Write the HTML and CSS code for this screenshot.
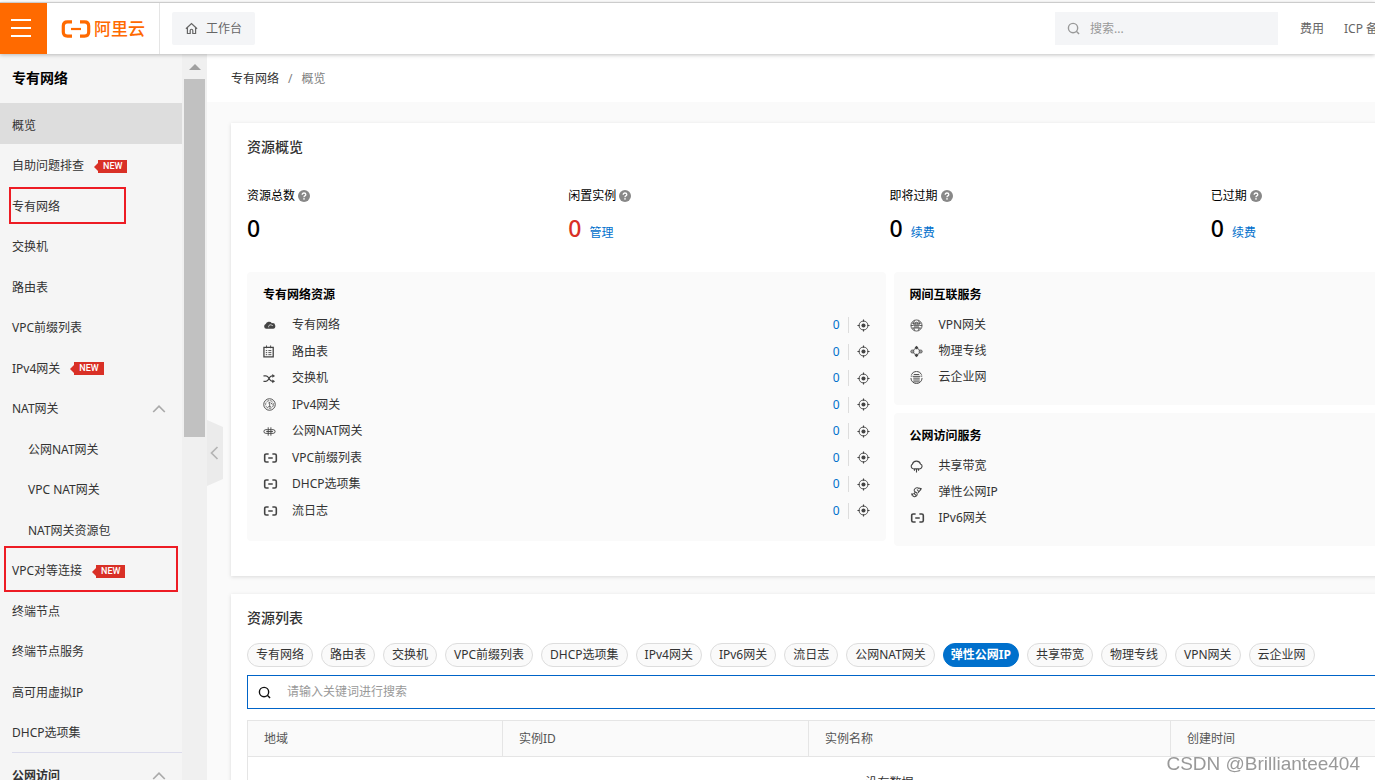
FILE: index.html
```html
<!DOCTYPE html>
<html lang="zh-CN">
<head>
<meta charset="utf-8">
<title>专有网络 - 概览</title>
<link rel="stylesheet" href="styles.css">
</head>
<body>
<svg class="sprite" aria-hidden="true">
  <symbol id="i-bracket" viewBox="0 0 16 12"><path d="M6 1.8H3.4Q1.8 1.8 1.8 3.4V8.6Q1.8 10.2 3.4 10.2H6M10 1.8h2.6q1.6 0 1.6 1.6v5.2q0 1.6-1.6 1.6H10M5.6 6h4.8" fill="none" stroke="currentColor" stroke-width="1.7"/></symbol>
  <symbol id="i-aim" viewBox="0 0 14 14"><circle cx="7" cy="7" r="4.8" fill="none" stroke="currentColor"/><circle cx="7" cy="7" r="2.2" fill="currentColor"/><path d="M7 .5v2.400M7 11.100v2.400M.5 7h2.400M11.100 7h2.400" stroke="currentColor" stroke-width="1.200"/></symbol>
  <symbol id="i-help" viewBox="0 0 12 12"><circle cx="6" cy="6" r="6" fill="#888"/><path d="M4.2 4.7Q4.2 3 6 3t1.8 1.5Q7.8 5.4 6.8 5.9 6 6.300 6 7.200" fill="none" stroke="#fff" stroke-width="1.3"/><circle cx="6" cy="8.900" r=".8" fill="#fff"/></symbol>
  <symbol id="i-search" viewBox="0 0 14 14"><circle cx="6.500" cy="6.500" r="5" fill="none" stroke="currentColor" stroke-width="1.500"/><path d="M10 10l3 3" stroke="currentColor" stroke-width="1.500"/></symbol>
  <symbol id="i-up" viewBox="0 0 14 8"><path d="M1.200 7L7 1.200 12.800 7" fill="none" stroke="currentColor" stroke-width="1.700"/></symbol>
  <symbol id="i-cloud" viewBox="0 0 14 14"><path d="M3.500 10.500A2.600 2.600 0 0 1 2.900 5.500 3.800 3.800 0 0 1 9.600 4.500 3 3 0 0 1 10.800 10.500Z" fill="currentColor"/><path d="M6.200 9a2 2 0 0 1 2.600-2.600l1.800.8" fill="none" stroke="#fafafa" stroke-width=".8"/></symbol>
  <symbol id="i-route" viewBox="0 0 14 14"><path d="M1 2.500h10v10.300H1z" fill="none" stroke="currentColor" stroke-width="1.400"/><path d="M3.800.5v3M8.200.5v3M3 6h1.500M5.800 6h3.200M3 8.200h1.500M5.800 8.200h3.200M3 10.400h1.500M5.800 10.400h3.200" stroke="currentColor"/></symbol>
  <symbol id="i-switch" viewBox="0 0 14 14"><path d="M.5 4.200h2.700Q5 4.200 6.500 7T10 10h1M.5 10h2.700Q5 10 6.500 7T10 4.200h1" fill="none" stroke="currentColor" stroke-width="1.300"/><path d="M10 2.200L13 4.200 10 6.200zM10 8L13 10 10 12z" fill="currentColor"/></symbol>
  <symbol id="i-ipv4" viewBox="0 0 14 14"><circle cx="7" cy="7" r="6.200" fill="none" stroke="currentColor"/><circle cx="7" cy="7" r="4.200" fill="none" stroke="currentColor" stroke-width=".8" stroke-dasharray="3 1"/><path d="M5.800 5.500L7.200 4.500V9.500M5.500 9.500h3.200M8.500 5l1.500 2" fill="none" stroke="currentColor" stroke-width=".9"/></symbol>
  <symbol id="i-nat" viewBox="0 0 14 14"><path d="M5 5H3a2 2 0 0 0 0 4H11a2 2 0 0 0 0-4H9M3.500 7h7.200M5.600 2.500v9M8.500 2.500v9M5 5h4" fill="none" stroke="currentColor"/></symbol>
  <symbol id="i-vpn" viewBox="0 0 14 14"><g fill="none" stroke="currentColor" stroke-width=".9"><circle cx="7" cy="7" r="6"/><path d="M2 4.500h10M2 9.700h10M1 7h3M10 7h3M5 1.500Q3.500 4 3.800 6M9 1.500Q10.500 4 10.200 6M5 12.500L4 9.500M9 12.500l1-3M5.500 6V5a1.500 1.500 0 0 1 3 0v1"/></g><path d="M4.300 6h5.400v1.200H4.300zM4.300 8h5.400v1.200H4.300z" fill="currentColor"/></symbol>
  <symbol id="i-line" viewBox="0 0 14 14"><circle cx="7" cy="7" r="3.400" fill="none" stroke="currentColor" stroke-width=".9"/><g fill="currentColor"><path d="M7 .8l2 2-2 2-2-2zM7 9.200l2 2-2 2-2-2z"/></g><g fill="#999" stroke="currentColor" stroke-width=".7"><circle cx="2.500" cy="7" r="1.700"/><circle cx="11.500" cy="7" r="1.700"/></g></symbol>
  <symbol id="i-cen" viewBox="0 0 14 14"><g fill="none" stroke="currentColor"><path d="M1.500 4a6 6 0 0 1 11 0M1 7.500a6 6 0 0 0 12 0M3.500 11.700h7M3.500 9.700h7M3 5.800h8M3.500 7.700h7M4 3.800h6M.8 5.500h1.700M11.500 5.500h1.700"/></g></symbol>
  <symbol id="i-share" viewBox="0 0 14 14"><path d="M3.500 9.500A2.700 2.700 0 0 1 2.500 4.600 4.600 4.600 0 0 1 11.300 4.300a2.700 2.700 0 0 1-.8 5.200" fill="none" stroke="currentColor" stroke-width="1.200"/><path d="M4.800 9v2.500M7 9v4.500M9.200 9v2.500M3.500 9.500h7" stroke="currentColor" stroke-width="1.200"/></symbol>
  <symbol id="i-eip" viewBox="0 0 14 14"><path d="M10 3A3.200 3.200 0 0 0 5 3.300C3.300 5.600 6 6.300 7 7.200s1.200 3-.6 3.900S3.300 11 3 10M11 4.500L8.500 7.500M3.800 8.500L6 6.500M7.500 3.800l2 2.200M4.500 8.200l2 2" fill="none" stroke="currentColor" stroke-width="1.100"/><path d="M9.500 1.500l3.300.8-1.200 3zM1 8l3 .2-1.700 3z" fill="currentColor"/></symbol>
</svg>

<header class="topbar">
  <button class="menu-btn" aria-label="菜单"><span></span><span></span><span></span></button>
  <a class="logo" href="#"><svg viewBox="0 0 30 18"><path d="M11 1.900H6.500Q2.300 1.900 2.300 6v6q0 4.100 4.200 4.100H11M19 1.900h4.500q4.200 0 4.200 4.100v6q0 4.100-4.200 4.100H19" fill="none" stroke="currentColor" stroke-width="3.200"/><path d="M10 9h10" stroke="currentColor" stroke-width="2.200"/></svg><span>阿里云</span></a>
  <a class="workbench" href="#"><svg viewBox="0 0 14 14"><path d="M1 7.300L7 1.600l6 5.700M2.600 6v6.400h3V9.200a1.400 1.400 0 0 1 2.800 0v3.200h3V6" fill="none" stroke="currentColor" stroke-width="1.300"/></svg>工作台</a>
  <label class="top-search"><svg><use href="#i-search"/></svg><input type="text" placeholder="搜索..." aria-label="搜索"></label>
  <nav class="top-links"><a href="#">费用</a><a href="#">ICP 备案</a></nav>
</header>

<div class="layout">
  <aside class="sidebar">
    <h2>专有网络</h2>
    <ul class="nav">
      <li class="active"><a href="#">概览</a></li>
      <li><a href="#">自助问题排查</a><span class="new">NEW</span></li>
      <li class="marked"><a href="#">专有网络</a></li>
      <li><a href="#">交换机</a></li>
      <li><a href="#">路由表</a></li>
      <li><a href="#">VPC前缀列表</a></li>
      <li><a href="#">IPv4网关</a><span class="new">NEW</span></li>
      <li><a href="#">NAT网关</a><svg class="chev"><use href="#i-up"/></svg></li>
      <li class="sub"><a href="#">公网NAT网关</a></li>
      <li class="sub"><a href="#">VPC NAT网关</a></li>
      <li class="sub"><a href="#">NAT网关资源包</a></li>
      <li class="marked wide"><a href="#">VPC对等连接</a><span class="new">NEW</span></li>
      <li><a href="#">终端节点</a></li>
      <li><a href="#">终端节点服务</a></li>
      <li><a href="#">高可用虚拟IP</a></li>
      <li><a href="#">DHCP选项集</a></li>
    </ul>
    <div class="group"><span>公网访问</span><svg class="chev"><use href="#i-up"/></svg></div>
  </aside>
  <div class="scrollbar"><i class="arrow"></i><i class="thumb"></i></div>

  <main class="main">
    <button class="collapse" aria-label="收起"><svg viewBox="0 0 16 66"><path d="M0 0L16 7V59L0 66Z" fill="#ebebeb"/><path d="M10.500 27L4.500 33l6 6" fill="none" stroke="#b5b5b5" stroke-width="1.700"/></svg></button>
    <nav class="crumbs"><a href="#">专有网络</a><span>/</span><span>概览</span></nav>
    <div class="content">
      <section class="card">
        <h3>资源概览</h3>
        <div class="stats">
          <div><p>资源总数<svg><use href="#i-help"/></svg></p><strong>0</strong></div>
          <div><p>闲置实例<svg><use href="#i-help"/></svg></p><strong class="red">0</strong><a href="#">管理</a></div>
          <div><p>即将过期<svg><use href="#i-help"/></svg></p><strong>0</strong><a href="#">续费</a></div>
          <div><p>已过期<svg><use href="#i-help"/></svg></p><strong>0</strong><a href="#">续费</a></div>
        </div>
        <div class="panels">
          <div class="panel">
            <h4>专有网络资源</h4>
            <ul class="res counted">
              <li><svg><use href="#i-cloud"/></svg><span>专有网络</span><a href="#">0</a><svg class="aim"><use href="#i-aim"/></svg></li>
              <li><svg><use href="#i-route"/></svg><span>路由表</span><a href="#">0</a><svg class="aim"><use href="#i-aim"/></svg></li>
              <li><svg><use href="#i-switch"/></svg><span>交换机</span><a href="#">0</a><svg class="aim"><use href="#i-aim"/></svg></li>
              <li><svg><use href="#i-ipv4"/></svg><span>IPv4网关</span><a href="#">0</a><svg class="aim"><use href="#i-aim"/></svg></li>
              <li><svg><use href="#i-nat"/></svg><span>公网NAT网关</span><a href="#">0</a><svg class="aim"><use href="#i-aim"/></svg></li>
              <li><svg class="br"><use href="#i-bracket"/></svg><span>VPC前缀列表</span><a href="#">0</a><svg class="aim"><use href="#i-aim"/></svg></li>
              <li><svg class="br"><use href="#i-bracket"/></svg><span>DHCP选项集</span><a href="#">0</a><svg class="aim"><use href="#i-aim"/></svg></li>
              <li><svg class="br"><use href="#i-bracket"/></svg><span>流日志</span><a href="#">0</a><svg class="aim"><use href="#i-aim"/></svg></li>
            </ul>
          </div>
          <div class="stack">
            <div class="panel">
              <h4>网间互联服务</h4>
              <ul class="res">
                <li><svg><use href="#i-vpn"/></svg><span>VPN网关</span></li>
                <li><svg><use href="#i-line"/></svg><span>物理专线</span></li>
                <li><svg><use href="#i-cen"/></svg><span>云企业网</span></li>
              </ul>
            </div>
            <div class="panel">
              <h4>公网访问服务</h4>
              <ul class="res">
                <li><svg><use href="#i-share"/></svg><span>共享带宽</span></li>
                <li><svg><use href="#i-eip"/></svg><span>弹性公网IP</span></li>
                <li><svg class="br"><use href="#i-bracket"/></svg><span>IPv6网关</span></li>
              </ul>
            </div>
          </div>
        </div>
      </section>

      <section class="card list">
        <h3>资源列表</h3>
        <div class="tags">
          <button>专有网络</button><button>路由表</button><button>交换机</button><button>VPC前缀列表</button><button>DHCP选项集</button><button>IPv4网关</button><button>IPv6网关</button><button>流日志</button><button>公网NAT网关</button><button class="on">弹性公网IP</button><button>共享带宽</button><button>物理专线</button><button>VPN网关</button><button>云企业网</button>
        </div>
        <label class="search"><svg><use href="#i-search"/></svg><input type="text" placeholder="请输入关键词进行搜索" aria-label="关键词"></label>
        <table>
          <thead><tr><th class="c1">地域</th><th class="c2">实例ID</th><th class="c3">实例名称</th><th>创建时间</th></tr></thead>
          <tbody><tr><td colspan="4">没有数据</td></tr></tbody>
        </table>
      </section>
    </div>
  </main>
</div>
<div class="watermark">CSDN @Brilliantee404</div>
</body>
</html>
```
FILE: styles.css
```css
* { box-sizing: border-box; margin: 0; padding: 0; }
body {
  height: 100vh;
  overflow: hidden;
  display: flex;
  flex-direction: column;
  padding-top: 2px;
  background: #fff;
  color: #333;
  font: 12px/20px "Noto Sans", "Noto Sans CJK SC", sans-serif;
}
a { color: inherit; text-decoration: none; }
ul { list-style: none; }
button, input { font: inherit; border: 0; background: none; outline: 0; }
svg { flex: none; }
.sprite { position: absolute; width: 0; height: 0; }

.topbar {
  position: relative;
  z-index: 2;
  display: flex;
  align-items: center;
  flex: none;
  height: 52px;
  border-top: 1px solid #ccc;
  background: #fff;
  color: #666;
  box-shadow: 0 1px 4px rgba(0, 0, 0, .25);
}
.menu-btn {
  display: flex;
  flex-direction: column;
  justify-content: center;
  gap: 6px;
  width: 47px;
  height: 100%;
  padding: 0 0 2px 11px;
  background: #ff6a00;
}
.menu-btn span { width: 20px; height: 2px; background: #fff; }
.logo {
  display: flex;
  align-items: center;
  gap: 3px;
  width: 113px;
  height: 100%;
  padding-left: 14px;
  border-right: 1px solid #e5e5e5;
  color: #ff6a00;
  font-size: 17px;
  font-weight: 500;
}
.logo svg { width: 30px; height: 18px; }
.workbench {
  display: flex;
  align-items: center;
  gap: 8px;
  height: 33px;
  margin-left: 12px;
  padding: 0 13px;
  border-radius: 2px;
  background: #f4f5f7;
}
.workbench svg { width: 13px; height: 13px; }
.top-search {
  display: flex;
  align-items: center;
  gap: 10px;
  width: 223px;
  height: 33px;
  margin-left: auto;
  padding: 0 12px;
  background: #f4f5f7;
  color: #999;
}
.top-search svg { width: 13px; height: 13px; }
.top-search input { flex: 1; min-width: 0; }
input::placeholder { color: #999; opacity: 1; }
.top-links {
  display: flex;
  gap: 20px;
  width: 97px;
  padding-left: 22px;
  white-space: nowrap;
  overflow: hidden;
}

.layout { display: flex; flex: 1; min-height: 0; }
.sidebar { flex: none; width: 182px; overflow: hidden; background: #f5f5f5; }
.sidebar h2 {
  height: 49px;
  padding-left: 12px;
  color: #000;
  font-size: 14px;
  line-height: 48px;
}
.nav { padding-bottom: 1px; }
.nav li {
  position: relative;
  display: flex;
  align-items: center;
  height: 40px;
  padding: 4px 16px 0 12px;
}
.nav li:nth-child(odd) { height: 41px; }
.nav li.active { background: #ddd; }
.nav li.sub { padding-left: 28px; }
.nav li.marked::after {
  content: "";
  position: absolute;
  inset: 3px 56px 1px 9px;
  border: 2px solid #ed1c24;
}
.nav li.wide::after { inset: -3px 4px -3px 4px; }
.new {
  position: relative;
  margin-left: 14px;
  padding: 0 5px;
  background: #d93026;
  color: #fff;
  font: 500 9px/13px Roboto, sans-serif;
}
.new::before {
  content: "";
  position: absolute;
  top: 3px;
  left: -4px;
  border: 4px solid transparent;
  border-left: 0;
  border-right-color: #d93026;
}
.chev { width: 14px; height: 8px; margin-left: auto; color: #aaa; }
.group {
  display: flex;
  align-items: center;
  height: 46px;
  margin-left: 12px;
  padding-right: 16px;
  border-top: 1px solid #dcdcec;
  font-weight: 700;
}
.scrollbar { flex: none; width: 25px; padding: 10px 2px 0; background: #f0f0f0; }
.scrollbar i { display: block; }
.arrow {
  width: 0;
  margin: 0 auto 9px;
  border: 6px solid transparent;
  border-top: 0;
  border-bottom-color: #a0a0a0;
}
.thumb { height: 50%; background: #c1c1c1; }

.main { position: relative; flex: 1; min-width: 0; overflow: hidden; background: #fafafa; }
.collapse { position: absolute; left: 0; top: 50%; width: 16px; height: 70px; }
.collapse svg { display: block; width: 16px; height: 66px; margin-top: 2px; }
.crumbs {
  display: flex;
  align-items: center;
  gap: 9px;
  height: 48px;
  padding: 2px 0 0 24px;
  background: #fff;
}
.crumbs span { color: #808080; }
.content {
  display: flex;
  flex-direction: column;
  gap: 18px;
  min-width: 1365px;
  padding: 21px 24px 0;
}
.card { padding: 14px 16px 30px; background: #fff; box-shadow: 0 1px 4px rgba(0, 0, 0, .13); }
.card h3 { font-size: 14px; font-weight: 500; line-height: 20px; }
.stats { display: grid; grid-template-columns: repeat(4, 1fr); margin: 29px 0 28px; color: #000; }
.stats p { display: flex; align-items: center; gap: 3px; margin-bottom: 6px; }
.stats p svg { width: 12px; height: 12px; }
.stats strong { font-size: 23px; font-weight: 500; line-height: 32px; }
.stats strong.red { color: #d93026; }
.stats a { margin-left: 8px; color: #0070cc; }
.panels { display: grid; grid-template-columns: 1fr 1fr; gap: 8px; align-items: start; }
.stack { display: grid; gap: 8px; }
.panel { padding: 13px 16px 15px; border-radius: 4px; background: #fafafa; }
.panel h4 { margin-bottom: 7px; color: #000; font-size: 12px; line-height: 20px; }
.res li { display: flex; align-items: center; height: 26px; }
.res svg { width: 13px; height: 13px; margin-right: 16px; color: #444; }
.res svg.br { width: 15px; height: 12px; margin-right: 14px; }
.counted li:nth-child(even) { height: 27px; }
.counted { padding-bottom: 2px; }
.res a { margin-left: auto; padding-right: 8px; line-height: 16px; border-right: 1px solid #ddd; color: #0070cc; }
.res svg.aim { margin: 0 0 0 8px; }

.tags { display: flex; gap: 8px; margin: 15px 0 8px; }
.tags button {
  height: 24px;
  padding: 0 8px;
  border: 1px solid #ddd;
  border-radius: 12px;
  background: #fafafa;
  color: #333;
  white-space: nowrap;
}
.tags .on { border-color: #0070cc; background: #0070cc; color: #fff; font-weight: 700; padding: 0 7px; }
.search {
  display: flex;
  align-items: center;
  gap: 16px;
  height: 34px;
  padding: 0 10px;
  border: 1px solid #0064c8;
  color: #111;
}
.search svg { width: 13px; height: 13px; }
.search input { flex: 1; }
table {
  width: 100%;
  margin-top: 11px;
  table-layout: fixed;
  border-collapse: collapse;
  border: 1px solid #e5e5e5;
}
th {
  height: 36px;
  padding: 0 16px;
  border: 1px solid #e5e5e5;
  background: #fafafa;
  color: #555;
  font-weight: 400;
  text-align: left;
}
.c1 { width: 255px; }
.c2 { width: 306px; }
.c3 { width: 362px; }
td { padding: 16px; text-align: center; }
.watermark {
  position: fixed;
  right: 15px;
  bottom: 4px;
  color: #999;
  font: 19px/24px "Liberation Sans", sans-serif;
}
```
